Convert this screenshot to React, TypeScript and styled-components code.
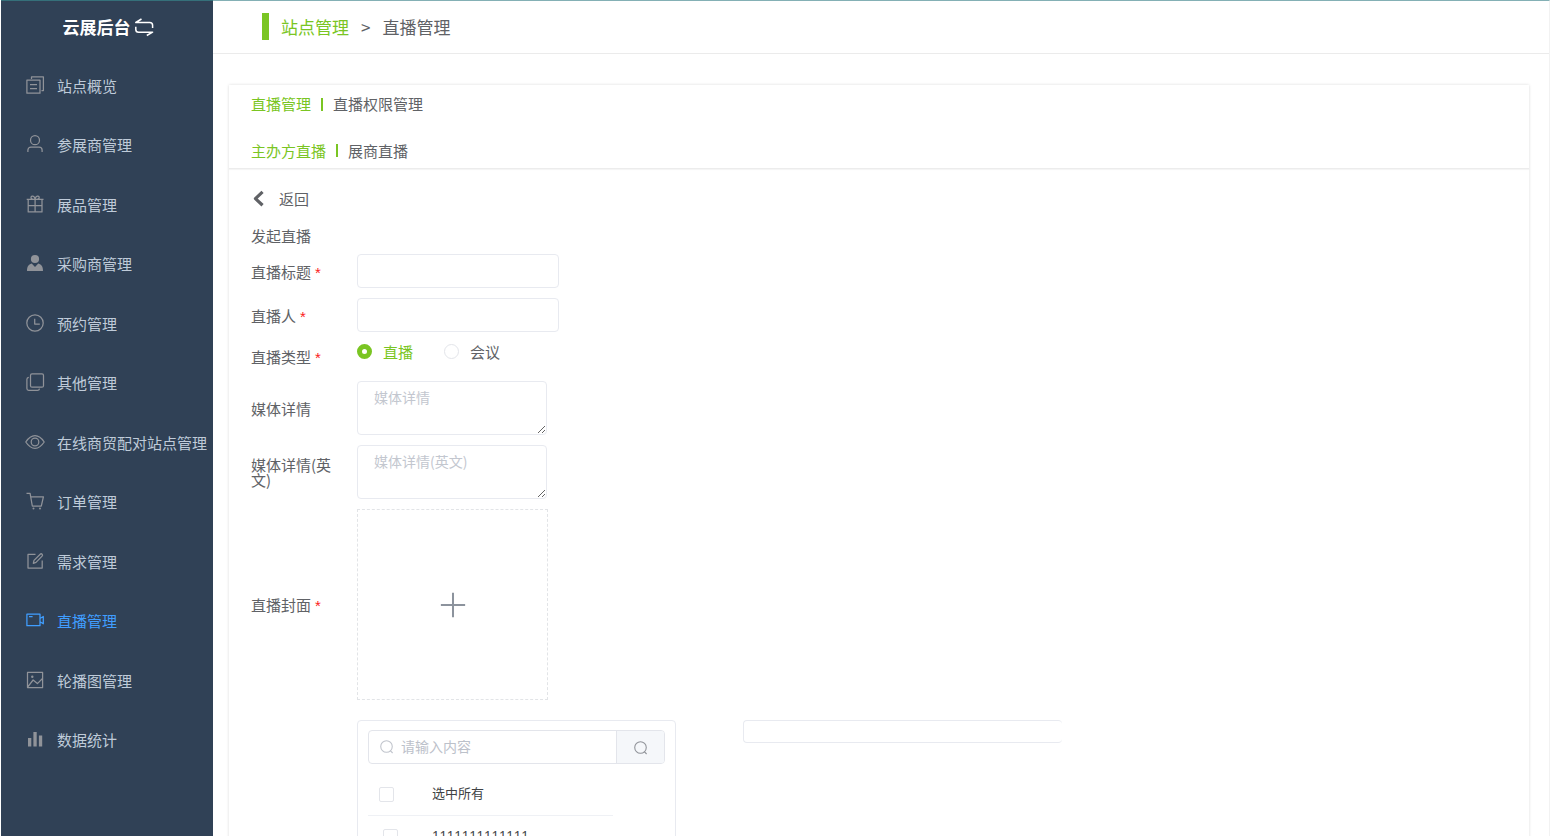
import React from "react";
import styled, { createGlobalStyle } from "styled-components";

const GlobalStyle = createGlobalStyle`
  *, *::before, *::after { box-sizing: border-box; }
  body {
    margin: 0;
    background: #fff;
    color: #606266;
    font-family: "Noto Sans CJK SC", sans-serif;
    font-size: 15px;
    line-height: 20px;
  }
  a { color: inherit; text-decoration: none; }
  input, textarea, button { font: inherit; color: inherit; margin: 0; }
  ul { list-style: none; margin: 0; padding: 0; }
`;

const GREEN = "#7ac523";
const BORDER = "#e8eaf0";

const Shell = styled.div`
  display: flex;
  height: 100vh;
  overflow: hidden;
  padding-left: 1px;
`;

const Sidebar = styled.aside`
  width: 212px;
  flex: none;
  background: #304156;
  border-top: 1px solid #35707a;
  overflow: hidden;
`;

const Brand = styled.button`
  display: flex;
  align-items: center;
  justify-content: center;
  gap: 4px;
  width: 100%;
  height: 55px;
  padding: 0 0 3px 1px;
  border: 0;
  background: none;
  color: #fff;
  font-size: 17px;
  font-weight: 700;
`;

const Menu = styled.ul`
  display: grid;
  grid-auto-rows: 1fr;
  height: 714px;
`;

const MenuLink = styled.a<{ $active?: boolean }>`
  display: flex;
  align-items: center;
  gap: 13px;
  height: 100%;
  padding-left: 25px;
  white-space: nowrap;
  color: ${(p) => (p.$active ? "#409eff" : "#bfcbd9")};
  svg { color: ${(p) => (p.$active ? "#409eff" : "#909399")}; margin-bottom: 2px; }
`;

const Icon = styled.svg.attrs({ viewBox: "0 0 18 18", "aria-hidden": true })<{ $size?: number; $weight?: number }>`
  width: ${(p) => p.$size ?? 18}px;
  height: ${(p) => p.$size ?? 18}px;
  flex: none;
  overflow: visible;
  fill: none;
  stroke: currentColor;
  stroke-width: ${(p) => p.$weight ?? 1.25};
  stroke-linejoin: round;
  .solid { fill: currentColor; stroke: none; }
`;

const Main = styled.main`
  flex: 1;
  min-width: 0;
  display: flex;
  flex-direction: column;
  border-top: 1px solid #84b0b5;
  border-right: 1px solid #f2f2f2;
`;

const Breadcrumb = styled.nav`
  display: flex;
  align-items: center;
  flex: none;
  gap: 12px;
  height: 53px;
  padding-left: 49px;
  border-bottom: 1px solid #ebebeb;
  font-size: 17px;
  &::before { content: ""; width: 7px; height: 27px; margin-bottom: 2px; background: ${GREEN}; }
`;

const Crumb = styled.a<{ $green?: boolean }>`
  color: ${(p) => (p.$green ? GREEN : "#606266")};
`;

const Content = styled.div`
  flex: 1;
  min-height: 0;
  padding: 31px 20px 0 16px;
  overflow-y: auto;
  scrollbar-width: none;
`;

const Card = styled.section`
  box-shadow: 0 0 3px rgba(0, 0, 0, 0.14);
`;

const Tabs = styled.header`
  display: grid;
  grid-template-rows: 38px 35px;
  gap: 10px;
  padding-left: 22px;
  border-bottom: 1px solid #ececec;
  box-shadow: 0 1px 1px rgba(0, 0, 0, 0.04);
`;

const TabRow = styled.nav`
  display: flex;
  align-items: center;
  gap: 10px;
`;

const Tab = styled.a<{ $active?: boolean }>`
  color: ${(p) => (p.$active ? GREEN : "#606266")};
`;

const Divider = styled.span`
  width: 2px;
  height: 13px;
  background: ${GREEN};
`;

const Form = styled.form`
  padding: 15px 22px 40px;
`;

const Back = styled.button`
  display: flex;
  align-items: center;
  gap: 12px;
  height: 30px;
  padding: 0;
  border: 0;
  background: none;
`;

const FormTitle = styled.h2`
  margin: 10px 0 6px;
  font-size: 15px;
  font-weight: 400;
  line-height: 24px;
`;

const Rows = styled.div`
  display: grid;
  gap: 10px;
`;

const Row = styled.div<{ $type?: boolean }>`
  display: flex;
  align-items: ${(p) => (p.$type ? "flex-start" : "center")};
`;

const Label = styled.label<{ $tall?: boolean }>`
  width: 106px;
  flex: none;
  padding-right: 20px;
  line-height: ${(p) => (p.$tall ? 29 : 15)}px;
`;

const Star = styled.span`
  margin-left: 4px;
  color: #fb2020;
  font-family: "Liberation Sans", sans-serif;
  line-height: 0;
`;

const TextInput = styled.input`
  width: 202px;
  height: 34px;
  padding: 0 15px;
  border: 1px solid ${BORDER};
  border-radius: 4px;
  background: #fff;
  outline: 0;
`;

const TextArea = styled.textarea`
  display: block;
  width: 190px;
  height: 54px;
  padding: 5px 16px;
  border: 1px solid ${BORDER};
  border-radius: 4px;
  font-size: 14px;
  outline: 0;
  resize: both;
  &::placeholder { color: #c3c7cf; }
`;

const RadioGroup = styled.div`
  display: flex;
  gap: 31px;
`;

const RadioLabel = styled.label`
  display: flex;
  align-items: center;
  gap: 11px;
  line-height: 19px;
  &:has(input:checked) { color: ${GREEN}; }
`;

const Radio = styled.input.attrs({ type: "radio" })`
  appearance: none;
  width: 15px;
  height: 15px;
  border: 1px solid #e3e5ea;
  border-radius: 50%;
  background: #fff;
  &:checked { border: 5px solid ${GREEN}; }
`;

const Upload = styled.button`
  display: grid;
  place-items: center;
  width: 191px;
  height: 191px;
  padding: 0;
  border: 1px dashed #e2e4e7;
  background: #fff;
  color: #8c939d;
`;

const Transfer = styled.div`
  display: flex;
  align-items: flex-start;
  gap: 67px;
  padding: 10px 0 0 106px;
`;

const Panel = styled.div`
  width: 319px;
  padding: 9px 10px;
  border: 1px solid ${BORDER};
  border-radius: 4px;
`;

const Selected = styled.div`
  width: 319px;
  height: 23px;
  border: 1px solid ${BORDER};
  border-right: 0;
  border-radius: 4px;
`;

const Search = styled.div`
  display: flex;
  height: 34px;
  border: 1px solid #e3e5eb;
  border-radius: 4px;
  overflow: hidden;
`;

const SearchField = styled.label`
  display: flex;
  align-items: center;
  flex: 1;
  gap: 8px;
  padding: 0 0 2px 11px;
  color: #c0c4cc;
`;

const SearchInput = styled.input`
  width: 100%;
  min-width: 0;
  height: 30px;
  padding: 0;
  border: 0;
  outline: 0;
  background: none;
  font-size: 14px;
  &::placeholder { color: #bcc1ca; }
`;

const SearchButton = styled.button`
  display: grid;
  place-items: center;
  width: 48px;
  padding: 0;
  border: 0;
  border-left: 1px solid #e3e5eb;
  background: #f5f7fa;
  color: #909399;
`;

const Option = styled.label<{ $nested?: boolean }>`
  display: grid;
  grid-template-columns: 53px 1fr;
  align-items: center;
  width: 245px;
  height: 42px;
  margin-top: ${(p) => (p.$nested ? 0 : 10)}px;
  padding: 0 0 1px 11px;
  border-bottom: 1px solid #eff1f5;
  color: #404244;
  font-family: "Noto Sans", "Noto Sans CJK SC", sans-serif;
  font-size: 13px;
  input { margin-left: ${(p) => (p.$nested ? 4 : 0)}px; }
  span { padding-bottom: 2px; }
`;

const Checkbox = styled.input.attrs({ type: "checkbox" })`
  appearance: none;
  width: 15px;
  height: 15px;
  border: 1px solid #e3e5ea;
  border-radius: 2px;
  background: #fff;
`;

const menu: { text: string; active?: boolean; icon: React.ReactNode }[] = [
  {
    text: "站点概览",
    icon: <path d="M.9 4H14V17.2H.9zM5.5 3V.9H17.4V14.5H15.5M4 8.5h7M4 12.5h7" />,
  },
  {
    text: "参展商管理",
    icon: (
      <>
        <circle cx="9" cy="5.2" r="4.5" />
        <path d="M1.9 17V15a3 3 0 0 1 3-3h8.2a3 3 0 0 1 3 3v2" />
      </>
    ),
  },
  {
    text: "展品管理",
    icon: (
      <path d="M.7 4.4H17.5M2.2 4.4V16.9H16V4.4M2.2 10.6H16M9.1 4.4V16.9M9.1 4.4C6 4.4 5 3.5 5 2.4 5 .6 8.6.2 9.1 4.4 9.6.2 13.2.6 13.2 2.4c0 1.1-1 2-4.1 2" />
    ),
  },
  {
    text: "采购商管理",
    icon: (
      <>
        <circle className="solid" cx="9" cy="5" r="4.1" />
        <path className="solid" d="M1 17c0-4 1.3-6.6 4.7-7.5L9 13l3.3-3.5C15.7 10.4 17 13 17 17z" />
      </>
    ),
  },
  {
    text: "预约管理",
    icon: (
      <>
        <circle cx="9" cy="9" r="8.2" />
        <path d="M8.7 4.7V10H13.8" />
      </>
    ),
  },
  {
    text: "其他管理",
    icon: (
      <>
        <rect x="4.5" y=".9" width="13" height="13.3" rx="1.5" />
        <path d="M2.8 4.3A2 2 0 0 0 .9 6.3V15.5a1.8 1.8 0 0 0 1.8 1.8h8.8a2 2 0 0 0 2-1.7" />
      </>
    ),
  },
  {
    text: "在线商贸配对站点管理",
    icon: (
      <>
        <path d="M-.2 9C2.8 4.4 6 2.7 9 2.7s6.2 1.7 9.2 6.3C15.2 13.6 12 15.3 9 15.3S2.8 13.6-.2 9z" />
        <circle cx="9" cy="9" r="3.8" />
      </>
    ),
  },
  {
    text: "订单管理",
    icon: (
      <>
        <path d="M.5 1.4H4.1L6.3 14H15.3L17.4 4.9H4.8" />
        <circle className="solid" cx="7.5" cy="16.5" r="1" />
        <circle className="solid" cx="14" cy="16.5" r="1" />
      </>
    ),
  },
  {
    text: "需求管理",
    icon: <path d="M9.5 2.4H2V16H16.2V8.5M7.3 11.3L8 8.4 14.2 2.2a1.3 1.3 0 0 1 1.9 1.9L10 10.4z" />,
  },
  {
    text: "直播管理",
    active: true,
    icon: <path d="M.9 3.2H14V14.7H.9zM3 5.7H6.6M14 7.5L17.3 5.5V12.8L14 10.8" />,
  },
  {
    text: "轮播图管理",
    icon: (
      <>
        <path d="M1.5 1.4H16.6V16.6H1.5zM2 15.6L7.1 9 11.4 12.6 16.5 7.5" />
        <circle className="solid" cx="6.3" cy="5.7" r="1.2" />
      </>
    ),
  },
  {
    text: "数据统计",
    icon: <path className="solid" d="M2 8H5.3V16.5H2zM7.4 2H10.7V16.5H7.4zM12.9 5.5H16.2V16.5H12.9z" />,
  },
];

const Magnifier = ({ size }: { size: number }) => (
  <Icon $size={size} $weight={1.5}>
    <circle cx="9" cy="9" r="8" />
    <path d="M14.2 14.7L17.5 18" />
  </Icon>
);

export default function App() {
  return (
    <>
      <GlobalStyle />
      <Shell>
        <Sidebar>
          <Brand type="button">
            云展后台
            <Icon $weight={1.5}>
              <path d="M6.5 1L.8 4.5H14.8a2.8 2.8 0 0 1 2.8 2.8V10M11.8 17.5L17.6 14.2H3.6A2.8 2.8 0 0 1 .8 11.4V8.8" />
            </Icon>
          </Brand>
          <Menu>
            {menu.map((item) => (
              <li key={item.text}>
                <MenuLink href="#" $active={item.active}>
                  <Icon>{item.icon}</Icon>
                  {item.text}
                </MenuLink>
              </li>
            ))}
          </Menu>
        </Sidebar>
        <Main>
          <Breadcrumb>
            <Crumb href="#" $green>站点管理</Crumb>
            <span>&gt;</span>
            <Crumb href="#">直播管理</Crumb>
          </Breadcrumb>
          <Content>
            <Card>
              <Tabs>
                <TabRow>
                  <Tab href="#" $active>直播管理</Tab>
                  <Divider />
                  <Tab href="#">直播权限管理</Tab>
                </TabRow>
                <TabRow>
                  <Tab href="#" $active>主办方直播</Tab>
                  <Divider />
                  <Tab href="#">展商直播</Tab>
                </TabRow>
              </Tabs>
              <Form>
                <Back type="button">
                  <Icon $size={16} $weight={3.6}>
                    <path d="M13 1L5 8.5L13 16" />
                  </Icon>
                  返回
                </Back>
                <FormTitle>发起直播</FormTitle>
                <Rows>
                  <Row>
                    <Label htmlFor="title">直播标题<Star>*</Star></Label>
                    <TextInput id="title" />
                  </Row>
                  <Row>
                    <Label htmlFor="host">直播人<Star>*</Star></Label>
                    <TextInput id="host" />
                  </Row>
                  <Row $type>
                    <Label as="span" $tall>直播类型<Star>*</Star></Label>
                    <RadioGroup>
                      <RadioLabel><Radio name="type" defaultChecked />直播</RadioLabel>
                      <RadioLabel><Radio name="type" />会议</RadioLabel>
                    </RadioGroup>
                  </Row>
                  <Row>
                    <Label htmlFor="detail">媒体详情</Label>
                    <TextArea id="detail" placeholder="媒体详情" />
                  </Row>
                  <Row>
                    <Label htmlFor="detail-en">媒体详情(英文)</Label>
                    <TextArea id="detail-en" placeholder="媒体详情(英文)" />
                  </Row>
                  <Row>
                    <Label htmlFor="cover">直播封面<Star>*</Star></Label>
                    <Upload id="cover" type="button">
                      <Icon $size={26} $weight={1.4}>
                        <path d="M9 .6V17.4M.6 9H17.4" />
                      </Icon>
                    </Upload>
                  </Row>
                  <Transfer>
                    <Panel>
                      <Search>
                        <SearchField>
                          <Magnifier size={13} />
                          <SearchInput placeholder="请输入内容" />
                        </SearchField>
                        <SearchButton type="button" aria-label="搜索">
                          <Magnifier size={13} />
                        </SearchButton>
                      </Search>
                      <Option><Checkbox /><span>选中所有</span></Option>
                      <Option $nested><Checkbox /><span>1111111111111</span></Option>
                    </Panel>
                    <Selected />
                  </Transfer>
                </Rows>
              </Form>
            </Card>
          </Content>
        </Main>
      </Shell>
    </>
  );
}
